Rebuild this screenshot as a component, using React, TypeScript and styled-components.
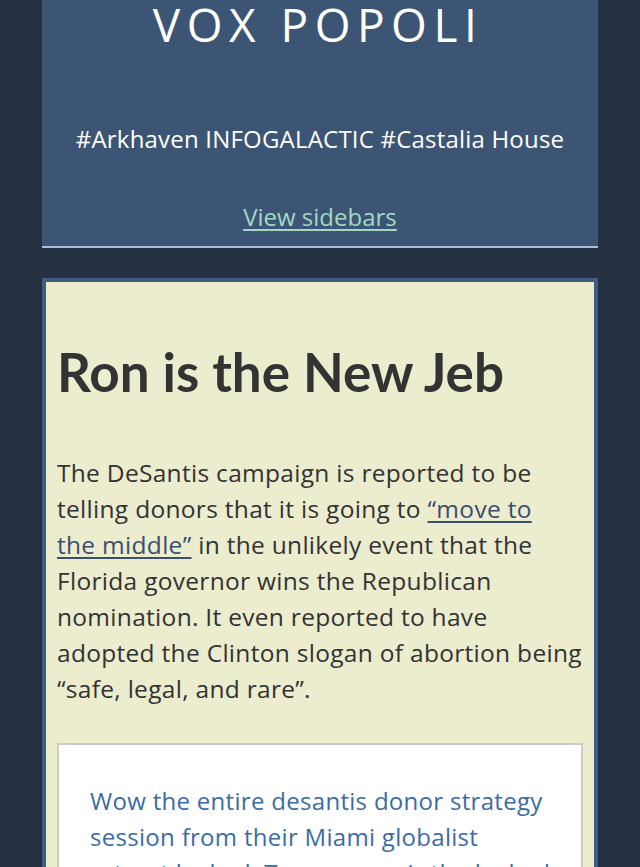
import React from "react";
import styled, { createGlobalStyle } from "styled-components";

const GlobalStyle = createGlobalStyle`
	html, body {
		margin: 0;
		padding: 0;
		background-color: #253142;
	}
	body {
		font-family: "Open Sans", "Lato", sans-serif;
	}
`;

const Page = styled.div`
	width: 556px;
	margin: 0 auto;
	overflow: hidden;
	height: 867px;
`;
const Header = styled.header`
	background-color: #3c5574;
	border-bottom: 2px solid #a9bcd8;
	text-align: center;
	color: #fff;
	padding-bottom: 11px;
`;
const Title = styled.h1`
	margin: -4px 0 0;
	padding-right: 4px;
	font-size: 46px;
	line-height: 56px;
	font-weight: 400;
	letter-spacing: 6.5px;
`;
const Tagline = styled.p`
	margin: 69px 0 0;
	font-size: 24px;
	line-height: 36px;
	letter-spacing: 0.2px;
`;
const SidebarLink = styled.a`
	display: inline-block;
	margin-top: 42px;
	font-size: 24px;
	line-height: 36px;
	color: #a3d9c3;
	text-decoration: underline;
	text-underline-offset: 3px;
`;
const Post = styled.article`
	margin-top: 30px;
	background-color: #ececcf;
	border: 4px solid #3f5e82;
	border-bottom: none;
	padding: 0 11px 40px 11px;
	color: #333;
`;
const PostTitle = styled.h2`
	margin: 0;
	padding-top: 60px;
	font-family: "Lato", "Open Sans", sans-serif;
	font-size: 53px;
	line-height: 60px;
	font-weight: 700;
`;
const Body = styled.p`
	margin: 53px -6px 0 0;
	font-size: 24.5px;
	line-height: 36px;
	letter-spacing: 0.3px;
	a {
		color: #3b4f6e;
		text-decoration: underline;
		text-underline-offset: 3px;
	}
`;
const Quote = styled.blockquote`
	margin: 36px 0 0;
	background-color: #fff;
	border: 2px solid #cbcbc4;
	padding: 38px 30px 20px 31px;
	color: #3b6ca4;
	font-size: 24px;
	line-height: 36px;
	letter-spacing: 0.3px;
`;

const App = () => {
	return (
		<>
			<GlobalStyle />
			<Page>
				<Header>
					<Title>VOX POPOLI</Title>
					<Tagline>#Arkhaven INFOGALACTIC #Castalia House</Tagline>
					<SidebarLink href="#">View sidebars</SidebarLink>
				</Header>
				<Post>
					<PostTitle>Ron is the New Jeb</PostTitle>
					<Body>
						The DeSantis campaign is reported to be
						<br />
						telling donors that it is going to <a href="#">“move to
						<br />
						the middle”</a> in the unlikely event that the
						<br />
						Florida governor wins the Republican
						<br />
						nomination. It even reported to have
						<br />
						adopted the Clinton slogan of abortion being
						<br />
						“safe, legal, and rare”.
					</Body>
					<Quote>
						Wow the entire desantis donor strategy session from their Miami
						globalist retreat leaked. Trump can air the leaked audio.
					</Quote>
				</Post>
			</Page>
		</>
	);
};

export default App;
